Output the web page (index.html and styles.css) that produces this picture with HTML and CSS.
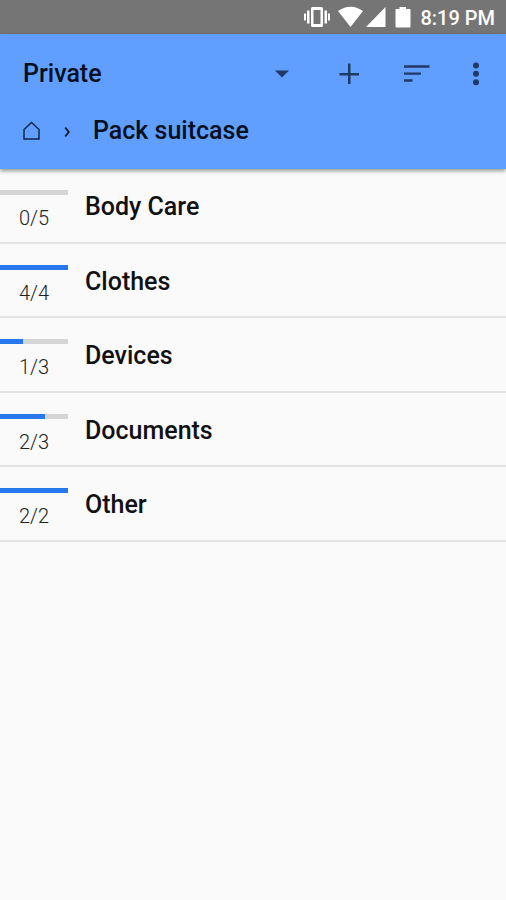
FILE: index.html
```html
<!DOCTYPE html>
<html lang="en">
<head>
<meta charset="utf-8">
<title>Pack suitcase</title>
<link rel="stylesheet" href="styles.css">
</head>
<body>
<div class="status">
  <svg class="status-icons" width="110" height="34" viewBox="0 0 110 34" fill="#fff">
    <path fill-rule="evenodd" d="M9.500 7h9q1.500 0 1.500 1.500v17q0 1.500-1.500 1.500h-9q-1.500 0-1.500-1.500v-17q0-1.500 1.500-1.500zM10.500 10v14h7V10z"/>
    <path d="M4 10.500h2.500v13H4zM1 13.500h2v7H1zM21.500 10.500H24v13h-2.500zM25 13.500h2v7h-2z"/>
    <path d="M35 11Q47.500 2.500 60 11L47.500 27zM82.500 7v20H63zM93 9h3.500V7h6.500v2h3.500q1 0 1 1v16.500q0 1-1 1H93.500q-1 0-1-1V9.500z"/>
  </svg>
  <span class="clock">8:19 PM</span>
</div>
<header class="appbar">
  <div class="toolbar">
    <span class="title">Private</span>
    <svg class="actions" width="246" height="40" viewBox="0 0 246 40" fill="#203a65">
      <path d="M15 16.500h14l-7 7z"/>
      <path d="M88 9.500h2.500V19H99v2.500h-8.500V30H88v-8.500h-8.500V19H88z"/>
      <path d="M144 11.300h25.500v2.400H144zM144 18.400h17v2.400h-17zM144 25.300h8.500v2.400H144z"/>
      <circle cx="216" cy="11.500" r="3"/><circle cx="216" cy="19.800" r="3"/><circle cx="216" cy="28.200" r="3"/>
    </svg>
  </div>
  <nav class="crumbs">
    <svg width="17" height="20" viewBox="0 0 17 20" fill="none" stroke="#10274b" stroke-width="1.500"><path d="M1 18V8.500L8.500 1.500 16 8.500V18z"/></svg>
    <svg class="chevron" width="7" height="12" viewBox="0 0 7 12" fill="none" stroke="#0b1930" stroke-width="1.800"><path d="M1.200 1.500L4.800 6 1.200 10.500"/></svg>
    <span class="title">Pack suitcase</span>
  </nav>
</header>
<main class="list">
  <div class="row"><div class="progress"><div class="track"><div class="fill" style="width:0"></div></div><span class="count">0/5</span></div><span class="name">Body Care</span></div>
  <div class="row"><div class="progress"><div class="track"><div class="fill" style="width:100%"></div></div><span class="count">4/4</span></div><span class="name">Clothes</span></div>
  <div class="row"><div class="progress"><div class="track"><div class="fill" style="width:33.33%"></div></div><span class="count">1/3</span></div><span class="name">Devices</span></div>
  <div class="row"><div class="progress"><div class="track"><div class="fill" style="width:66.67%"></div></div><span class="count">2/3</span></div><span class="name">Documents</span></div>
  <div class="row"><div class="progress"><div class="track"><div class="fill" style="width:100%"></div></div><span class="count">2/2</span></div><span class="name">Other</span></div>
</main>
</body>
</html>
```
FILE: styles.css
```css
* { box-sizing: border-box; }
body {
  margin: 0;
  min-height: 900px;
  background: #fafafa;
  color: #111;
  font-family: Roboto, sans-serif;
}
svg { display: block; flex: none; }
.status {
  display: flex;
  justify-content: flex-end;
  height: 34px;
  padding-right: 11px;
  background: #757575;
  color: #fff;
}
.status-icons { margin-right: 7px; }
.clock {
  font-size: 20px;
  font-weight: 500;
  line-height: 36px;
  white-space: nowrap;
}
.appbar {
  height: 135px;
  background: #609fff;
  box-shadow: 0 2px 4px rgba(0, 0, 0, .4);
}
.toolbar {
  display: flex;
  justify-content: space-between;
  align-items: center;
  height: 80px;
  padding-left: 23px;
}
.title {
  color: #070f1c;
  font-size: 25px;
  font-weight: 500;
  line-height: 30px;
  white-space: nowrap;
}
.crumbs {
  display: flex;
  align-items: center;
  height: 34px;
  padding-left: 23px;
}
.chevron { margin: 2px 22px 0 24px; }
.row {
  display: flex;
  height: 74.5px;
  border-bottom: 2px solid #e3e3e3;
}
.progress {
  width: 68px;
  padding-top: 21px;
  text-align: center;
}
.track { height: 5px; background: #d5d5d5; }
.fill { height: 100%; background: #2878ed; }
.count {
  display: block;
  margin-top: 10px;
  color: #222;
  font-size: 20px;
  font-weight: 300;
  line-height: 26px;
}
.name {
  margin-left: 17px;
  padding-top: 23px;
  font-size: 25px;
  font-weight: 500;
  line-height: 30px;
}
```
